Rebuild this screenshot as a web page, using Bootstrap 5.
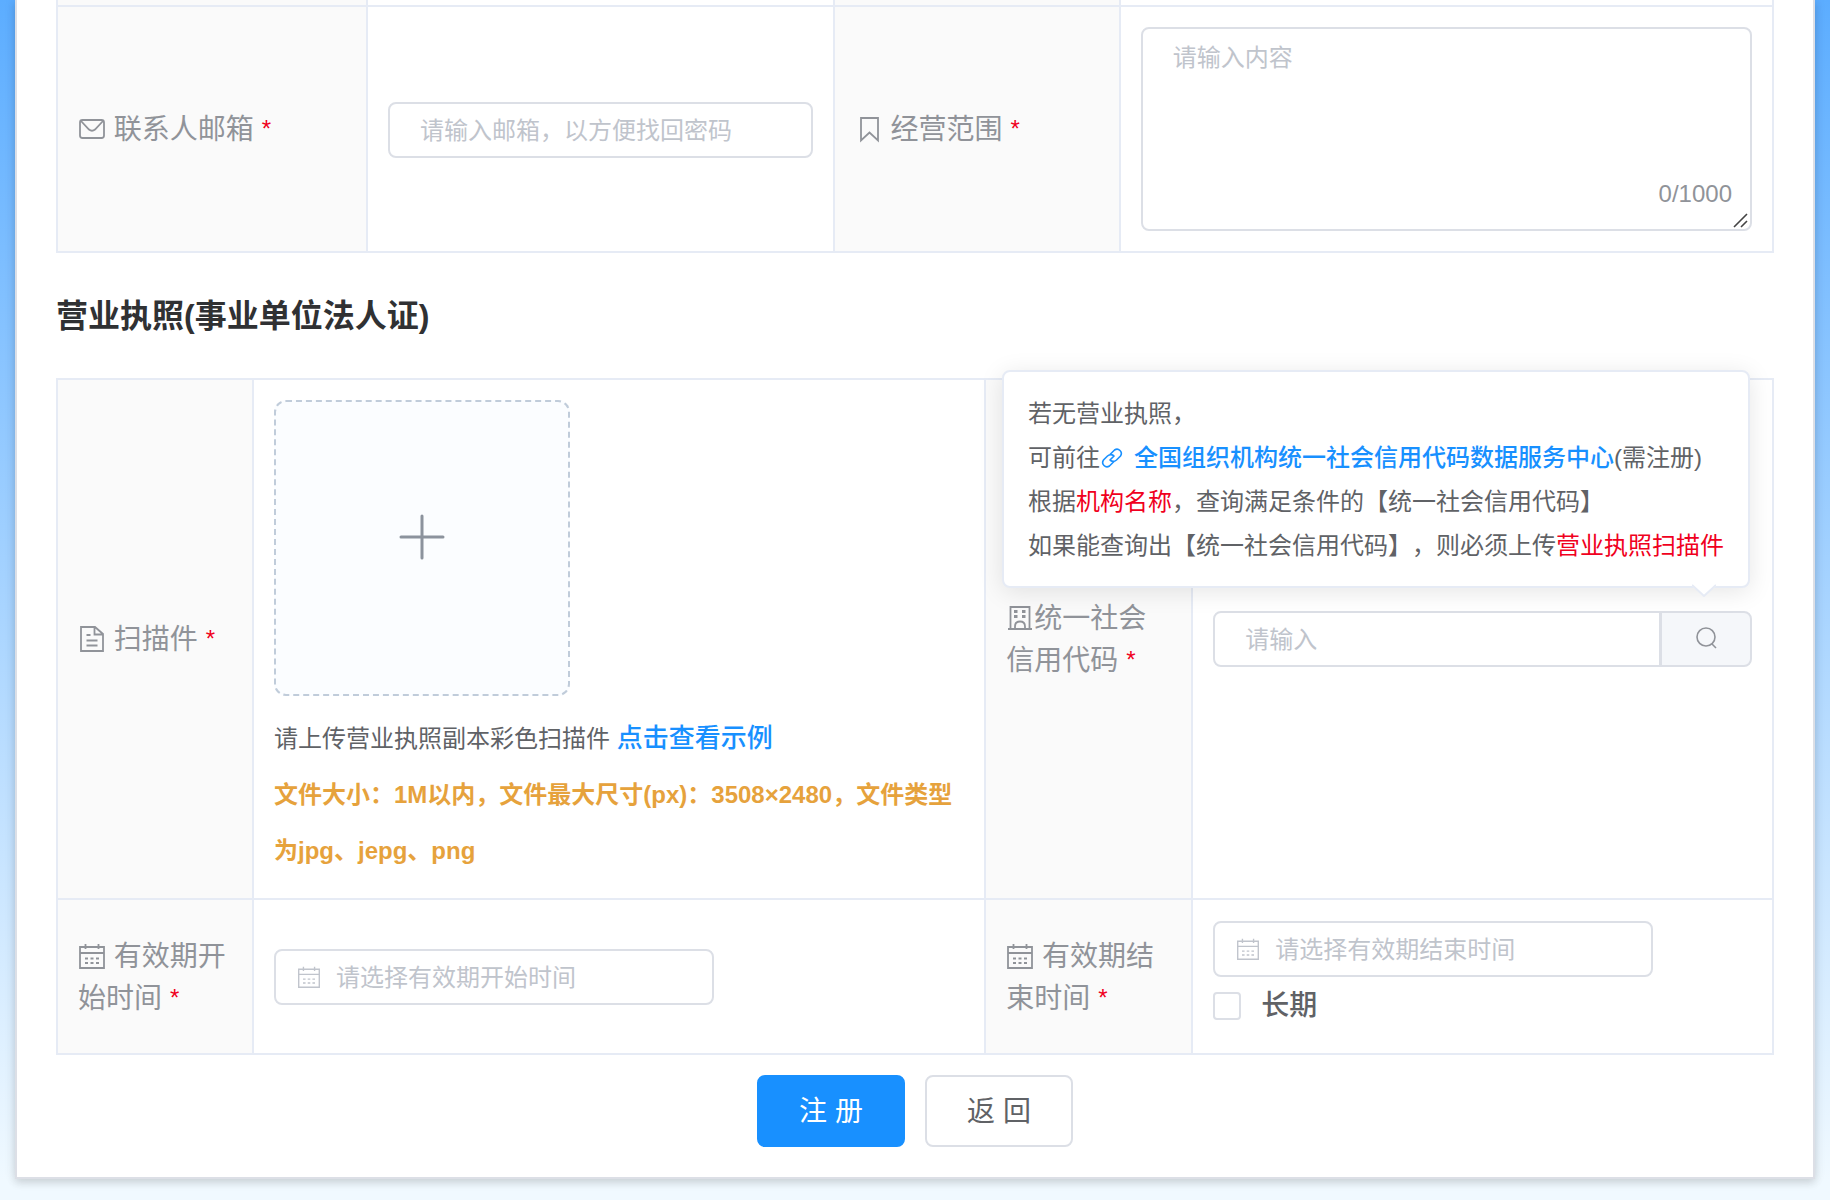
<!DOCTYPE html>
<html lang="zh-CN">
<head>
<meta charset="utf-8">
<meta name="viewport" content="width=device-width, initial-scale=1">
<title>单位注册</title>
<link href="https://cdn.jsdelivr.net/npm/bootstrap@5.3.0/dist/css/bootstrap.min.css" rel="stylesheet">
<style>
  :root {
    --line: #e6ebf5;
    --field: #dcdfe6;
    --hint: #c0c4cc;
    --muted: #909399;
    --ink: #606266;
    --brand: #1890ff;
    --alert: #f00020;
  }
  body {
    font-family: "Liberation Sans", "Noto Sans CJK SC", sans-serif;
    font-size: 24px;
    line-height: 44px;
    color: var(--ink);
    min-height: 100vh;
    background: linear-gradient(180deg, #5cadff 0, #f0f9ff 1180px);
    text-spacing-trim: space-all;
  }
  .sheet {
    margin: 0 15px 21px;
    padding: 0 39px 30px;
    background: #fff;
    border: 2px solid var(--field);
    border-top: 0;
    box-shadow: 0 4px 8px rgba(0, 0, 0, .12), 0 0 12px rgba(0, 0, 0, .08);
  }
  .info { width: 100%; table-layout: fixed; border-collapse: collapse; margin: 0; }
  .info th, .info td { border: 2px solid var(--line); padding: 21px 20px 19px; vertical-align: middle; }
  .info th { padding: 22px 20px 20px; background: #fafafa; font-weight: 400; font-size: 28px; line-height: 42px; color: var(--muted); }
  .info .tail th, .info .tail td { height: 6px; padding: 0; border-top: 0; }
  .info .flush { padding: 20px; }
  .ico { width: 28px; height: 28px; fill: none; stroke: currentColor; stroke-width: 1.8; vertical-align: -4px; }
  .ico-sm { width: 24px; height: 24px; stroke-width: 1.6; }
  .must { color: var(--alert); }
  .star { color: var(--alert); font-size: 24px; line-height: 24px; vertical-align: 2px; margin-left: 8px; }
  .sec-title { font-size: 32px; line-height: 45px; font-weight: 700; color: #303133; margin: 0; padding: 41px 0 39px; }
  .field { height: 56px; font-size: 24px; line-height: 36px; padding: 9px 30px 7px; color: var(--ink); border: 2px solid var(--field); border-radius: 8px; }
  .field::placeholder { color: var(--hint); opacity: 1; }
  textarea.field { display: block; height: 204px; padding: 11px 30px; resize: none; }
  .counter { right: 20px; bottom: 25px; color: var(--muted); }
  .grip { right: 4px; bottom: 3px; width: 15px; height: 15px; stroke: #444; stroke-width: 1.6; }
  .upload { display: flex; width: 296px; height: 296px; padding: 0 0 22px; align-items: center; justify-content: center; background: #fbfdff; border: 2px dashed #c0ccda; border-radius: 12px; color: #8c939d; }
  .upload svg { width: 46px; height: 46px; stroke: currentColor; stroke-width: 3; stroke-linecap: round; }
  .notes { margin: 14px 0 -1px; line-height: 56px; }
  .strongish { font-weight: 500; color: var(--brand); text-decoration: none; }
  .sample { font-size: 26px; }
  .rules { font-weight: 700; color: #e6a23c; }
  .look { width: 92px; background: #f5f7fa; border: 2px solid var(--field); border-radius: 8px; color: var(--muted); padding: 0; line-height: 24px; }
  .tip { right: 2px; bottom: calc(100% + 23px); padding: 20px 24px 18px; white-space: nowrap; background: #fff; border: 2px solid var(--line); border-radius: 8px; box-shadow: 0 4px 24px rgba(0, 0, 0, .1); z-index: 5; }
  .tip svg.beak { right: 32px; top: 100%; width: 24px; height: 13px; margin-top: -2px; }
  .site { margin-left: 10px; }
  .dater { width: 440px; max-width: 100%; }
  .dater .ico { left: 23px; top: 16px; color: var(--hint); }
  .dater .field { padding-left: 60px; }
  .tick { line-height: 57px; font-size: 28px; font-weight: 500; gap: 20px; }
  .tick .form-check-input { width: 28px; height: 28px; margin: 0; border: 2px solid var(--field); border-radius: 4px; }
  .actions { gap: 20px; padding-top: 20px; }
  .act { width: 148px; height: 72px; padding: 2px 0 0; font-size: 28px; border-width: 2px; border-radius: 8px; }
  .act-main { background: var(--brand); border-color: var(--brand); color: #fff; }
  .act-back { background: #fff; border-color: var(--field); color: var(--ink); }
</style>
<script src="https://cdn.jsdelivr.net/npm/bootstrap@5.3.0/dist/js/bootstrap.bundle.min.js"></script>
</head>
<body>
<svg class="d-none">
  <symbol id="cal" viewBox="0 0 28 28"><path d="M2 5h24v21H2zM2 11h24M7.500 2v5M20.500 2v5"/><path d="M7 16.500h3M12.500 16.500h3M18 16.500h3M7 21h3M12.500 21h3M18 21h3"/></symbol>
</svg>
<main class="sheet">
  <form>
    <table class="info">
      <colgroup><col style="width:310px"><col style="width:27.2%"><col style="width:286px"><col></colgroup>
      <tbody>
        <tr class="tail"><th></th><td></td><th></th><td></td></tr>
        <tr>
          <th scope="row"><label for="mail"><svg class="ico" viewBox="0 0 28 28"><rect x="2" y="5" width="24" height="18" rx="2.500"/><path d="M3 6l8 8.500q3 2.500 6 0L25 6"/></svg>&nbsp;联系人邮箱<span class="star">*</span></label></th>
          <td><input id="mail" type="email" class="form-control field" placeholder="请输入邮箱，以方便找回密码"></td>
          <th scope="row"><label for="scope"><svg class="ico" viewBox="0 0 28 28"><path d="M6 3h17v22.500l-8.500-8-8.500 8z"/></svg>&nbsp;经营范围<span class="star">*</span></label></th>
          <td class="flush">
            <div class="position-relative">
              <textarea id="scope" class="form-control field" placeholder="请输入内容"></textarea>
              <span class="counter position-absolute lh-1">0/1000</span>
              <svg class="grip position-absolute" viewBox="0 0 15 15"><path d="M1 14L14 1M8 14l6-6"/></svg>
            </div>
          </td>
        </tr>
      </tbody>
    </table>

    <h2 class="sec-title">营业执照(事业单位法人证)</h2>

    <table class="info">
      <colgroup><col style="width:196px"><col><col style="width:207px"><col style="width:33.85%"></colgroup>
      <tbody>
        <tr>
          <th scope="row"><svg class="ico" viewBox="0 0 28 28"><path d="M3 2h14l8 7v17H3zM16.500 2v7.500H25M8.500 10h4M8.500 15.500h11M8.500 20.500h11"/></svg>&nbsp;扫描件<span class="star">*</span></th>
          <td class="flush">
            <button type="button" class="upload" aria-label="上传扫描件"><svg viewBox="0 0 46 46"><path d="M23 2v42M2 23h42"/></svg></button>
            <p class="notes">请上传营业执照副本彩色扫描件 <a href="#" class="strongish sample">点击查看示例</a><br>
              <b class="rules">文件大小：1M以内，文件最大尺寸(px)：3508×2480，文件类型为jpg、jepg、png</b></p>
          </td>
          <th scope="row"><label for="code"><svg class="ico" viewBox="0 0 28 28"><path d="M4.500 25V3h19v22M2 25h24M9 25v-2.500q0-5 5-5t5 5V25"/><path stroke-width="3" d="M8 7.500h3.500M16 7.500h3.500M8 12.500h3.500M16 12.500h3.500"/></svg>统一社会信用代码<span class="star">*</span></label></th>
          <td class="flush">
            <div class="position-relative">
              <div class="input-group">
                <input id="code" type="text" class="form-control field" placeholder="请输入">
                <button type="button" class="btn look" aria-label="查询"><svg class="ico ico-sm" viewBox="0 0 24 24"><circle cx="12" cy="11" r="9"/><path d="M18 18l4 4"/></svg></button>
              </div>
              <div class="tip position-absolute" role="tooltip">
                若无营业执照，<br>
                可前往<a href="#" class="strongish"><svg class="ico ico-sm" viewBox="0 0 24 24"><path d="M10 8.500l4.500-4.500q3-2 5.500.5t.5 5.500l-4 4q-3 2.500-6 .5M14 15.500L9.500 20q-3 2-5.500-.5T3.500 14l4-4q3-2.500 6-.5M9.500 14.500l5-5"/></svg><span class="site">全国组织机构统一社会信用代码数据服务中心</span></a>(需注册)<br>
                根据<span class="must">机构名称</span>，查询满足条件的【统一社会信用代码】<br>
                如果能查询出【统一社会信用代码】，则必须上传<span class="must">营业执照扫描件</span>
                <svg class="beak position-absolute" viewBox="0 0 24 13"><path d="M0 0h24v2L12 12 0 2z" fill="#fff"/><path d="M0 1l12 11L24 1" fill="none" stroke="#e6ebf5" stroke-width="2"/></svg>
              </div>
            </div>
          </td>
        </tr>
        <tr>
          <th scope="row"><label for="from"><svg class="ico"><use href="#cal"/></svg>&nbsp;有效期开始时间<span class="star">*</span></label></th>
          <td class="flush"><div class="dater position-relative"><input id="from" type="text" class="form-control field" placeholder="请选择有效期开始时间"><svg class="ico ico-sm position-absolute"><use href="#cal"/></svg></div></td>
          <th scope="row"><label for="to"><svg class="ico"><use href="#cal"/></svg>&nbsp;有效期结束时间<span class="star">*</span></label></th>
          <td>
            <div class="dater position-relative"><input id="to" type="text" class="form-control field" placeholder="请选择有效期结束时间"><svg class="ico ico-sm position-absolute"><use href="#cal"/></svg></div>
            <div class="tick d-flex align-items-center"><input id="long" type="checkbox" class="form-check-input"><label for="long">长期</label></div>
          </td>
        </tr>
      </tbody>
    </table>

    <div class="actions d-flex justify-content-center">
      <button type="button" class="btn act act-main">注 册</button>
      <button type="button" class="btn act act-back">返 回</button>
    </div>
  </form>
</main>
</body>
</html>
